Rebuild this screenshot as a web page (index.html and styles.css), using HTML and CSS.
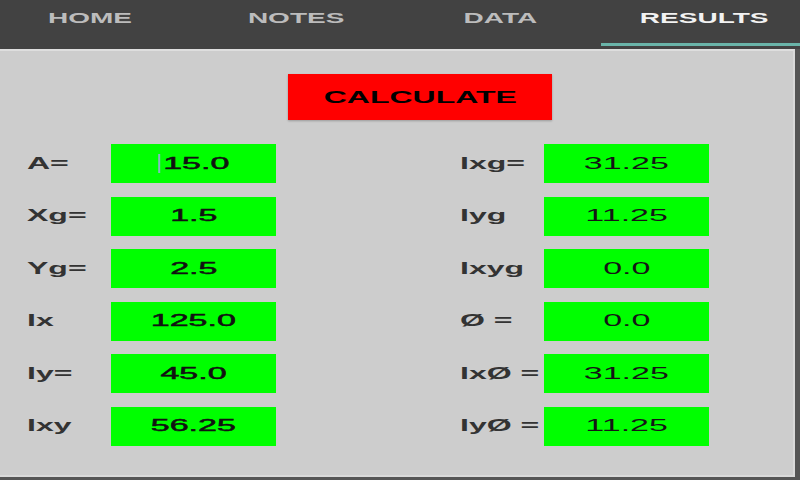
FILE: index.html
```html
<!DOCTYPE html>
<html lang="en">

<head>
    <meta charset="UTF-8">
    <meta name="viewport" content="width=device-width, initial-scale=1.0">
    <title>Section Properties</title>
    <link rel="stylesheet" href="styles.css">
</head>

<body>
    <div class="tabs">
        <div class="tab tab-home"><span class="wide">HOME</span></div>
        <div class="tab tab-notes"><span class="wide">NOTES</span></div>
        <div class="tab"><span class="wide">DATA</span></div>
        <div class="tab tab-results active"><span class="wide">RESULTS</span></div>
    </div>

    <div class="panel">
        <button class="calc"><span class="wide">CALCULATE</span></button>

        <div class="results">
            <div class="col">
                <div class="label"><span class="wide">A=</span></div>
                <div class="value input"><span class="wide focused">15.0</span></div>

                <div class="label"><span class="wide">Xg=</span></div>
                <div class="value input"><span class="wide">1.5</span></div>

                <div class="label"><span class="wide">Yg=</span></div>
                <div class="value input"><span class="wide">2.5</span></div>

                <div class="label"><span class="wide">Ix</span></div>
                <div class="value input"><span class="wide">125.0</span></div>

                <div class="label"><span class="wide">Iy=</span></div>
                <div class="value input"><span class="wide">45.0</span></div>

                <div class="label"><span class="wide">Ixy</span></div>
                <div class="value input"><span class="wide">56.25</span></div>
            </div>

            <div class="col">
                <div class="label"><span class="wide">Ixg=</span></div>
                <div class="value"><span class="wide">31.25</span></div>

                <div class="label"><span class="wide">Iyg</span></div>
                <div class="value"><span class="wide">11.25</span></div>

                <div class="label"><span class="wide">Ixyg</span></div>
                <div class="value"><span class="wide">0.0</span></div>

                <div class="label"><span class="wide">Ø =</span></div>
                <div class="value"><span class="wide">0.0</span></div>

                <div class="label"><span class="wide">IxØ =</span></div>
                <div class="value"><span class="wide">31.25</span></div>

                <div class="label"><span class="wide">IyØ =</span></div>
                <div class="value"><span class="wide">11.25</span></div>
            </div>
        </div>
    </div>
</body>

</html>
```

FILE: styles.css
```css
body {
    margin: 0;
    height: 480px;
    overflow: hidden;
    background-color: #555;
    font-family: "Liberation Sans", Arial, sans-serif;
    display: flex;
    flex-direction: column;
}

/* text on this screen is drawn twice as wide as it is tall */
.wide {
    display: inline-block;
    transform: scaleX(2);
    white-space: nowrap;
}

/* top tab bar */
.tabs {
    height: 49px;
    background-color: #424242;
    display: grid;
    grid-template-columns: repeat(4, 1fr);
    flex-shrink: 0;
}

.tab {
    box-sizing: border-box;
    padding-top: 10px;
    line-height: 16px;
    font-size: 14px;
    font-weight: bold;
    color: #bcbcbc;
    text-align: center;
}

.tab-home {
    padding-right: 20px;
}

.tab-notes {
    padding-right: 8px;
}

.tab-results {
    padding-left: 8px;
}

.tab.active {
    color: #f2f2f2;
    background: linear-gradient(#6ab4a9, #6ab4a9) no-repeat 1px 43px / 100% 3px;
}

/* results panel */
.panel {
    flex: 1;
    margin: 0 5px 3px 0;
    background-color: #cdcdcd;
    border-top: 2px solid #dedede;
    border-right: 2px solid #d9d9d9;
    border-bottom: 2px solid #d9d9d9;
}

.calc {
    display: flex;
    align-items: center;
    justify-content: center;
    width: 264px;
    height: 46px;
    margin: 23px 0 0 288px;
    padding: 2px 0 0;
    border: none;
    background-color: #ff0000;
    box-shadow: 0 1px 2px rgba(0, 0, 0, 0.25);
    font-family: inherit;
    font-size: 16px;
    font-weight: bold;
    color: #000;
}

.results {
    display: flex;
    gap: 184px;
    margin-top: 24px;
    padding-left: 27px;
}

.col {
    display: grid;
    grid-template-columns: 84px 165px;
    grid-auto-rows: 39px;
    row-gap: 13.6px;
}

.label {
    display: flex;
    align-items: center;
    font-size: 16px;
    font-weight: bold;
    color: #333;
}

.label .wide {
    transform-origin: left center;
}

.value {
    display: flex;
    align-items: center;
    justify-content: center;
    background-color: #00ff00;
    font-size: 17px;
    color: #151515;
}

/* editable fields are drawn a little heavier */
.value.input {
    color: #111;
    -webkit-text-stroke: 0.5px #111;
}

/* text cursor in the focused field */
.focused::before {
    content: "";
    display: inline-block;
    width: 1px;
    height: 19px;
    margin-right: 1.5px;
    vertical-align: -4px;
    background-color: #86b6c6;
}
```
